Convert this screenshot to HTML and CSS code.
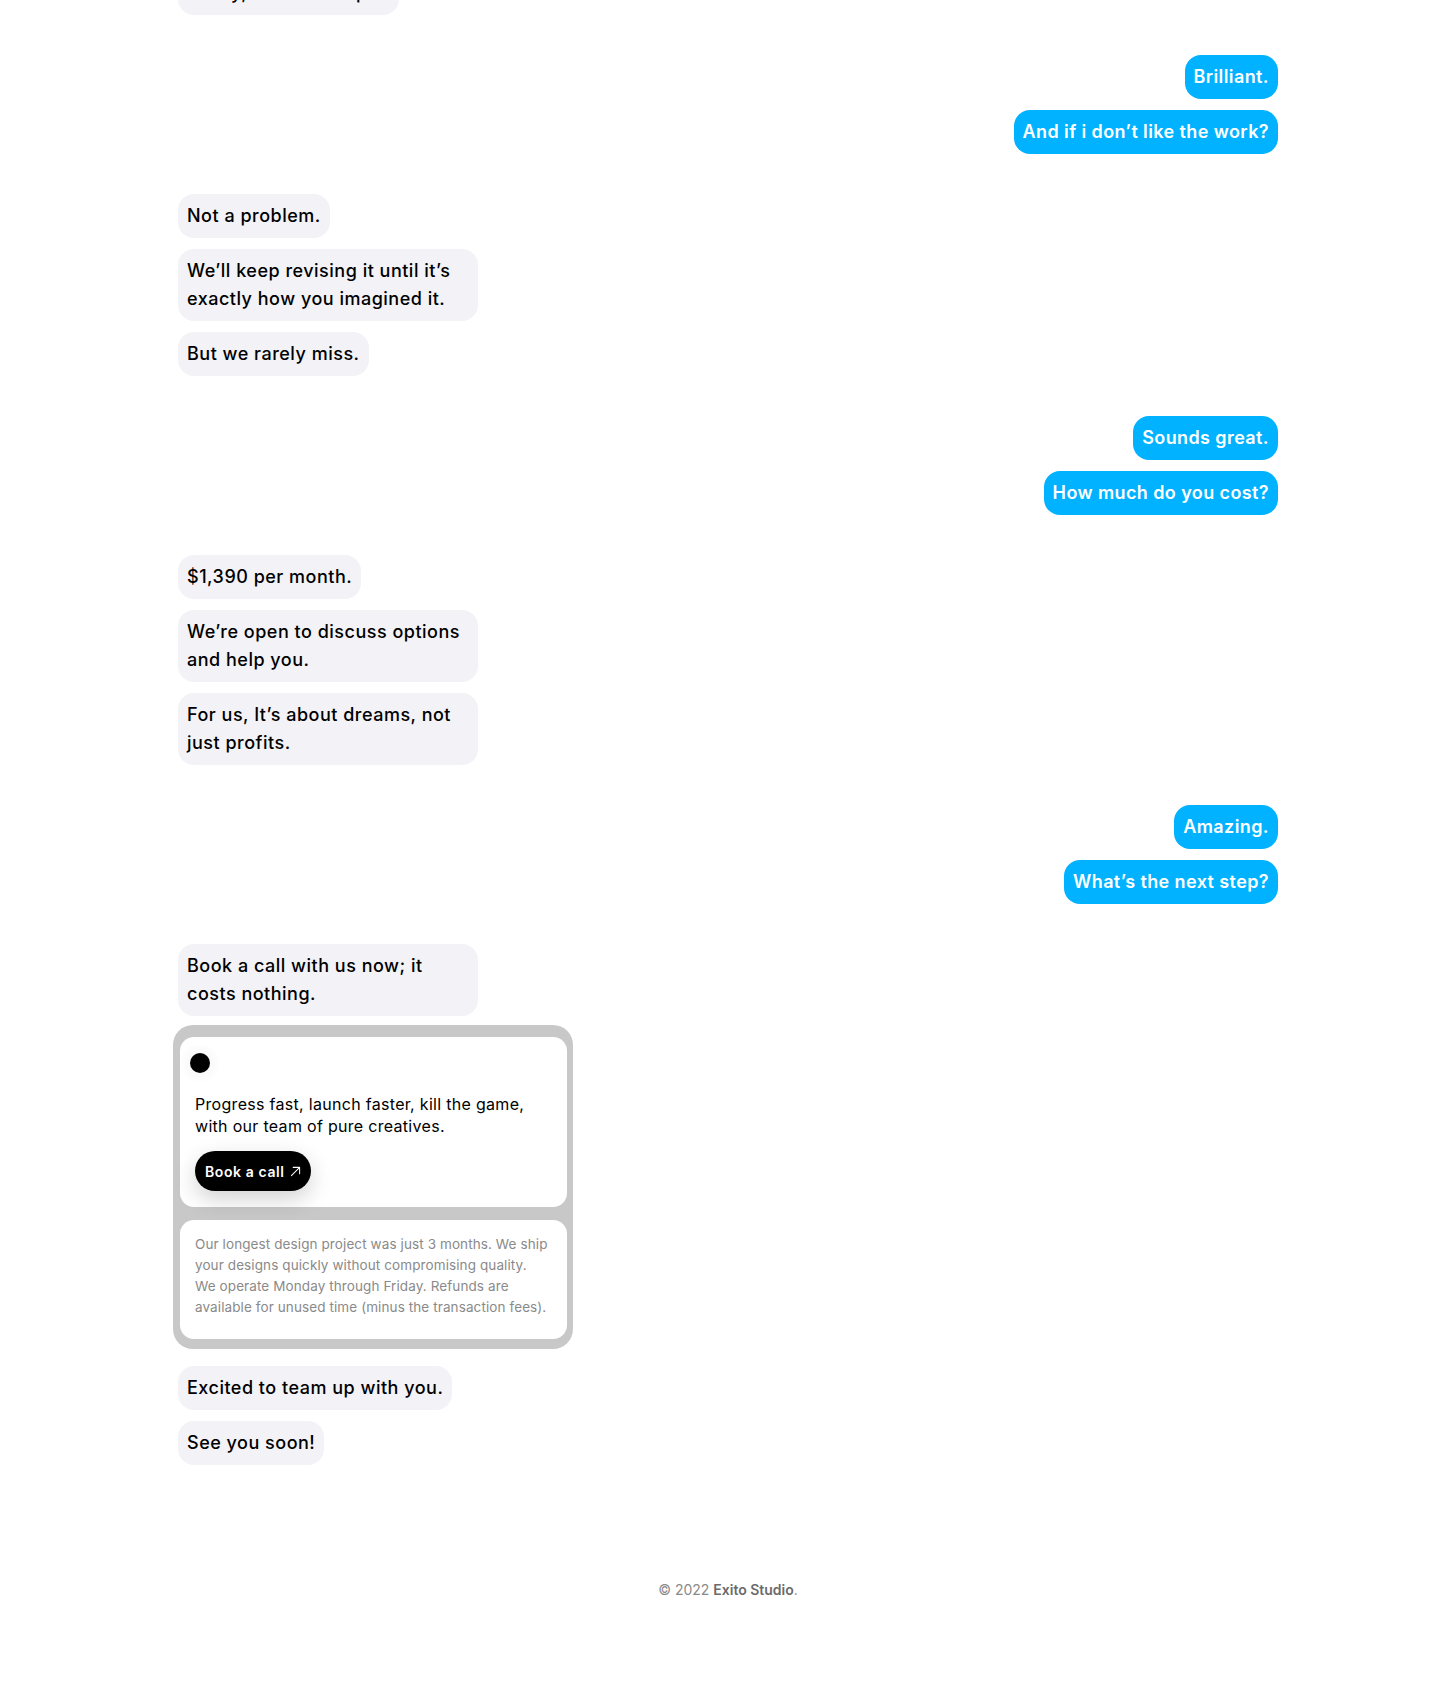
FILE: index.html
```html
<!DOCTYPE html>
<html lang="en">
<head>
<meta charset="utf-8">
<title>Exito Studio — Chat</title>
<link rel="stylesheet" href="styles.css">
</head>
<body>
<main class="page">
  <div class="chat">
    <div class="group them">
      <div class="bubble">Really, it’s that simple.</div>
    </div>

    <div class="group me">
      <div class="bubble">Brilliant.</div>
      <div class="bubble">And if i don’t like the work?</div>
    </div>

    <div class="group them">
      <div class="bubble">Not a problem.</div>
      <div class="bubble wide">We’ll keep revising it until it’s<br>exactly how you imagined it.</div>
      <div class="bubble">But we rarely miss.</div>
    </div>

    <div class="group me">
      <div class="bubble">Sounds great.</div>
      <div class="bubble">How much do you cost?</div>
    </div>

    <div class="group them">
      <div class="bubble">$1,390 per month.</div>
      <div class="bubble wide">We’re open to discuss options<br>and help you.</div>
      <div class="bubble wide">For us, It’s about dreams, not<br>just profits.</div>
    </div>

    <div class="group me">
      <div class="bubble">Amazing.</div>
      <div class="bubble">What’s the next step?</div>
    </div>

    <div class="group them">
      <div class="bubble wide">Book a call with us now; it<br>costs nothing.</div>

      <div class="card">
        <div class="card-top">
          <span class="dot"></span>
          <p class="pitch">Progress fast, launch faster, kill the game,<br>with our team of pure creatives.</p>
          <a class="cta" href="#">Book a call
            <svg class="cta-arrow" viewBox="0 0 12 12" width="11" height="11" aria-hidden="true">
              <path d="M1.5 10.5 L10.5 1.5 M3.5 1.5 H10.5 V8.5" fill="none" stroke="currentColor" stroke-width="1.1" stroke-linecap="round" stroke-linejoin="round"/>
            </svg>
          </a>
        </div>
        <div class="card-bottom">
          <p class="note">Our longest design project was just 3 months. We ship<br>your designs quickly without compromising quality.<br>We operate Monday through Friday. Refunds are<br>available for unused time (minus the transaction fees).</p>
        </div>
      </div>

      <div class="bubble">Excited to team up with you.</div>
      <div class="bubble">See you soon!</div>
    </div>
  </div>

  <footer class="footer">© 2022 <strong>Exito Studio</strong>.</footer>
</main>
</body>
</html>
```

FILE: styles.css
```css
* {
  box-sizing: border-box;
}

html, body {
  margin: 0;
  padding: 0;
  background: #ffffff;
}

body {
  font-family: Inter, "Noto Sans", "Liberation Sans", sans-serif;
  color: #000;
  -webkit-font-smoothing: antialiased;
}

.page {
  width: 1100px;
  margin: 0 auto;
  padding-bottom: 80px;
}

.chat {
  display: flex;
  flex-direction: column;
  gap: 40px;
  margin-top: -29px;
}

.group {
  display: flex;
  flex-direction: column;
  gap: 11px;
}

.group.them {
  align-items: flex-start;
}

.group.me {
  align-items: flex-end;
}

.bubble {
  padding: 8px 9px;
  border-radius: 16px;
  font-size: 18px;
  line-height: 28px;
  font-weight: 500;
  white-space: nowrap;
  letter-spacing: 0.5px;
}

.bubble.wide {
  width: 300px;
}

.them .bubble {
  background: #f2f2f7;
  color: #000;
}

.me .bubble {
  background: #00b2ff;
  color: #ffffff;
  font-weight: 600;
  letter-spacing: 0.4px;
}

/* card */
.card {
  width: 400px;
  margin: -2px 0 6px -5px;
  padding: 12px 6px 10px 7px;
  background: #c8c8c8;
  border-radius: 20px;
  display: flex;
  flex-direction: column;
  gap: 13px;
}

.card-top,
.card-bottom {
  background: #ffffff;
  border-radius: 14px;
}

.card-top {
  padding: 16px 15px 16px 15px;
  display: flex;
  flex-direction: column;
  align-items: flex-start;
}

.dot {
  width: 20px;
  height: 20px;
  margin-left: -5px;
  border-radius: 50%;
  background: #000;
  box-shadow: 0 0 6px 7px rgba(0, 0, 0, 0.025);
}

.pitch {
  margin: 20px 0 14px;
  font-size: 16px;
  line-height: 22px;
  font-weight: 400;
  color: #000;
  white-space: nowrap;
  letter-spacing: 0.3px;
}

.cta {
  display: inline-flex;
  align-items: center;
  gap: 5px;
  height: 40px;
  padding: 0 10px 0 10px;
  background: #000;
  color: #fff;
  border-radius: 20px;
  font-size: 14px;
  font-weight: 600;
  letter-spacing: 0.6px;
  text-decoration: none;
  box-shadow: 0 8px 22px rgba(0, 0, 0, 0.18);
}

.cta-arrow {
  display: block;
  margin-top: 1px;
}

.card-bottom {
  padding: 14px 15px 21px 15px;
}

.note {
  margin: 0;
  font-size: 13.5px;
  line-height: 21px;
  color: #8a8a8a;
  font-weight: 400;
  white-space: nowrap;
  letter-spacing: 0.1px;
}

.footer {
  margin-top: 115px;
  text-align: center;
  font-size: 14px;
  line-height: 20px;
  color: #8a8a8a;
}

.footer strong {
  color: #6b6b6b;
  font-weight: 600;
}
```
